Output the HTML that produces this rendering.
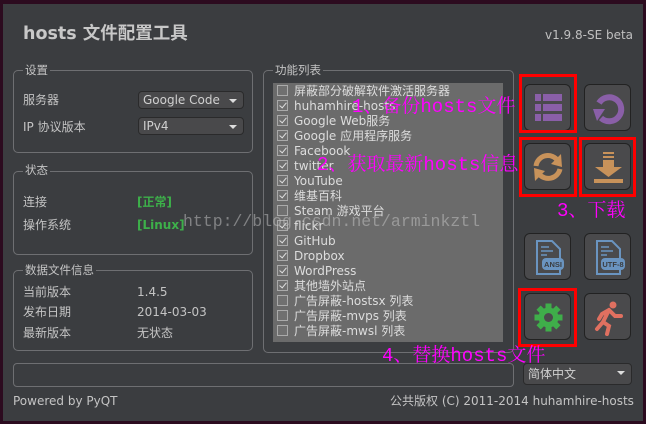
<!DOCTYPE html>
<html><head><meta charset="utf-8"><style>
*{margin:0;padding:0;box-sizing:border-box}
body{width:646px;height:424px;background:#2c0b1f;position:relative;overflow:hidden;font-family:"DejaVu Sans","Noto Sans CJK SC",sans-serif;color:#c4c4c4;font-size:12px}
.a{position:absolute}
.win{left:3px;top:4px;width:640px;height:417px;background:#3b3d40}
.grp{border:1px solid #6e6f72;border-radius:5px}
.lbl{background:#3b3d40;padding:0 2px;font-size:11.5px;line-height:13px}
.t{font-size:12px;line-height:14px;white-space:nowrap}
.combo{background:#49494b;border:1px solid #2a2a2b;border-radius:4px;font-size:12px;line-height:16px;padding-left:4px;color:#d0d0d0}
.combo:after{content:"";position:absolute;right:6px;top:7px;border-left:4px solid transparent;border-right:4px solid transparent;border-top:4px solid #ddd}
.list{left:273px;top:83px;width:230px;height:259px;background:#6b6b6b}
.row{position:absolute;left:4px;font-size:12px;line-height:14px;color:#ddd;white-space:nowrap}
.cb{display:inline-block;width:11px;height:11px;border:1px solid #aaa;vertical-align:-1px;margin-right:6px;position:relative;background:#707070}
.cb.on:after{content:"";position:absolute;left:3px;top:0px;width:3px;height:6px;border:solid #e0e0e0;border-width:0 1.5px 1.5px 0;transform:rotate(40deg)}
.btn{width:47px;height:47px;background:#4a4a4c;border:1px solid #222;border-radius:6px}
.btn svg{position:absolute;left:0;top:0}
.red{border:3px solid #f00}
.mag{color:#f0f;font-family:"Liberation Mono","Noto Serif CJK SC",monospace;font-size:19px;white-space:nowrap;line-height:20px}
</style></head><body>
<div class="a win"></div>
<div class="a t" style="left:23px;top:23px;font-size:17.5px;line-height:22px;font-weight:bold;color:#c8c8c8">hosts 文件配置工具</div>
<div class="a t" style="left:545px;top:28px;color:#c0c0c0">v1.9.8-SE beta</div>

<div class="a grp" style="left:13px;top:70px;width:240px;height:83px"></div>
<div class="a lbl" style="left:23px;top:64px">设置</div>
<div class="a t" style="left:23px;top:93px">服务器</div>
<div class="a combo" style="left:138px;top:91px;width:106px;height:18px">Google Code</div>
<div class="a t" style="left:23px;top:120px">IP 协议版本</div>
<div class="a combo" style="left:138px;top:117px;width:106px;height:18px">IPv4</div>

<div class="a grp" style="left:13px;top:171px;width:240px;height:84px"></div>
<div class="a lbl" style="left:23px;top:164px">状态</div>
<div class="a t" style="left:23px;top:195px">连接</div>
<div class="a t" style="left:137px;top:195px;color:#3db04a;font-weight:bold">[正常]</div>
<div class="a t" style="left:23px;top:218px">操作系统</div>
<div class="a t" style="left:137px;top:218px;color:#3db04a;font-weight:bold">[Linux]</div>

<div class="a grp" style="left:13px;top:270px;width:240px;height:81px"></div>
<div class="a lbl" style="left:23px;top:264px">数据文件信息</div>
<div class="a t" style="left:23px;top:285px">当前版本</div><div class="a t" style="left:137px;top:285px">1.4.5</div>
<div class="a t" style="left:23px;top:305px">发布日期</div><div class="a t" style="left:137px;top:305px">2014-03-03</div>
<div class="a t" style="left:23px;top:326px">最新版本</div><div class="a t" style="left:137px;top:326px">无状态</div>

<div class="a grp" style="left:263px;top:70px;width:251px;height:283px"></div>
<div class="a lbl" style="left:273px;top:64px">功能列表</div>
<div class="a list">
<div class="row" style="top:1px"><span class="cb"></span>屏蔽部分破解软件激活服务器</div>
<div class="row" style="top:16px"><span class="cb on"></span>huhamhire-hosts</div>
<div class="row" style="top:31px"><span class="cb on"></span>Google Web服务</div>
<div class="row" style="top:46px"><span class="cb on"></span>Google 应用程序服务</div>
<div class="row" style="top:61px"><span class="cb on"></span>Facebook</div>
<div class="row" style="top:76px"><span class="cb on"></span>twitter</div>
<div class="row" style="top:91px"><span class="cb on"></span>YouTube</div>
<div class="row" style="top:106px"><span class="cb on"></span>维基百科</div>
<div class="row" style="top:121px"><span class="cb"></span>Steam 游戏平台</div>
<div class="row" style="top:136px"><span class="cb on"></span>flickr</div>
<div class="row" style="top:151px"><span class="cb on"></span>GitHub</div>
<div class="row" style="top:166px"><span class="cb on"></span>Dropbox</div>
<div class="row" style="top:181px"><span class="cb on"></span>WordPress</div>
<div class="row" style="top:196px"><span class="cb on"></span>其他墙外站点</div>
<div class="row" style="top:211px"><span class="cb"></span>广告屏蔽-hostsx 列表</div>
<div class="row" style="top:226px"><span class="cb"></span>广告屏蔽-mvps 列表</div>
<div class="row" style="top:241px"><span class="cb"></span>广告屏蔽-mwsl 列表</div>
</div>

<div class="a btn" style="left:524px;top:84px"><svg width="47" height="47"><g fill="#8a5fa8"><rect x="10" y="9" width="6" height="7"/><rect x="18" y="9" width="19" height="7"/><rect x="10" y="19" width="6" height="7"/><rect x="18" y="19" width="19" height="7"/><rect x="10" y="29" width="6" height="7"/><rect x="18" y="29" width="19" height="7"/></g></svg></div>
<div class="a btn" style="left:584px;top:84px"><svg width="47" height="47"><path d="M14 18 A12 12 0 1 1 16 33" fill="none" stroke="#8a5fa8" stroke-width="6"/><path d="M8 24 L20 24 L12 36 Z" fill="#8a5fa8"/></svg></div>
<div class="a btn" style="left:524px;top:143px"><svg width="47" height="47"><path d="M11 22 A12 12 0 0 1 33 17" fill="none" stroke="#c8925a" stroke-width="5"/><path d="M36 10 L37 23 L26 20 Z" fill="#c8925a"/><path d="M35 25 A12 12 0 0 1 14 30" fill="none" stroke="#c8925a" stroke-width="5"/><path d="M10 37 L9 24 L20 27 Z" fill="#c8925a"/></svg></div>
<div class="a btn" style="left:584px;top:143px"><svg width="47" height="47"><g fill="#c8925a"><rect x="18" y="8" width="11" height="2"/><rect x="18" y="12" width="11" height="2"/><rect x="18" y="16" width="11" height="7"/><path d="M10 23 L37 23 L23.5 33 Z"/><rect x="9" y="35" width="29" height="4"/></g></svg></div>
<div class="a btn" style="left:524px;top:233px"><svg width="47" height="47"><path d="M12 7 L27 7 L35 15 L35 40 L12 40 Z" fill="none" stroke="#6a94c0" stroke-width="2"/><g stroke="#6a94c0" stroke-width="1.5"><line x1="16" y1="13" x2="24" y2="13"/><line x1="16" y1="17" x2="28" y2="17"/><line x1="16" y1="21" x2="22" y2="21"/></g><rect x="17" y="24" width="22" height="12" rx="4" fill="#6a94c0"/><text x="28" y="33" font-size="7.5" font-family="Liberation Sans" fill="#3b3d40" text-anchor="middle" font-weight="bold">ANSI</text></svg></div>
<div class="a btn" style="left:584px;top:233px"><svg width="47" height="47"><path d="M12 7 L27 7 L35 15 L35 40 L12 40 Z" fill="none" stroke="#6a94c0" stroke-width="2"/><g stroke="#6a94c0" stroke-width="1.5"><line x1="16" y1="13" x2="24" y2="13"/><line x1="16" y1="17" x2="28" y2="17"/><line x1="16" y1="21" x2="22" y2="21"/></g><rect x="16" y="24" width="24" height="12" rx="4" fill="#6a94c0"/><text x="28" y="33" font-size="7.5" font-family="Liberation Sans" fill="#3b3d40" text-anchor="middle" font-weight="bold">UTF-8</text></svg></div>
<div class="a btn" style="left:524px;top:293px"><svg width="47" height="47"><g fill="#3fae4a" transform="translate(23.5 23.5)"><circle r="10"/><g><rect x="-3" y="-14" width="6" height="28"/><rect x="-3" y="-14" width="6" height="28" transform="rotate(45)"/><rect x="-3" y="-14" width="6" height="28" transform="rotate(90)"/><rect x="-3" y="-14" width="6" height="28" transform="rotate(135)"/></g></g><circle cx="23.5" cy="23.5" r="4.5" fill="#4a4a4c"/></svg></div>
<div class="a btn" style="left:584px;top:293px"><svg width="47" height="47"><g fill="#e07060" stroke="#e07060" stroke-linecap="round"><circle cx="28" cy="11" r="3.5" stroke="none"/><path d="M24 16 L18 28 L24 32 L22 40 M18 28 L12 35 M24 16 L30 22 L36 22 M24 16 L17 20 L14 25" fill="none" stroke-width="4"/></g></svg></div>

<div class="a red" style="left:519px;top:74px;width:58px;height:59px"></div>
<div class="a red" style="left:519px;top:137px;width:58px;height:60px"></div>
<div class="a red" style="left:579px;top:137px;width:57px;height:60px"></div>
<div class="a red" style="left:518px;top:288px;width:59px;height:59px"></div>

<div class="a grp" style="left:13px;top:363px;width:501px;height:24px;border-radius:4px"></div>
<div class="a combo" style="left:523px;top:363px;width:109px;height:22px;line-height:20px">简体中文</div>
<div class="a t" style="left:13px;top:394px">Powered by PyQT</div>
<div class="a t" style="left:390px;top:394px">公共版权 (C) 2011-2014 huhamhire-hosts</div>

<div class="a mag" style="left:352px;top:97px">1、备份hosts文件</div>
<div class="a mag" style="left:317px;top:155px">2、获取最新hosts信息</div>
<div class="a mag" style="left:557px;top:201px">3、下载</div>
<div class="a mag" style="left:382px;top:346px">4、替换hosts文件</div>
<div class="a" style="left:183px;top:212px;font-family:'Liberation Mono',monospace;font-size:16.5px;color:rgba(200,200,200,.5);white-space:nowrap">http://blog.csdn.net/arminkztl</div>
</body></html>
